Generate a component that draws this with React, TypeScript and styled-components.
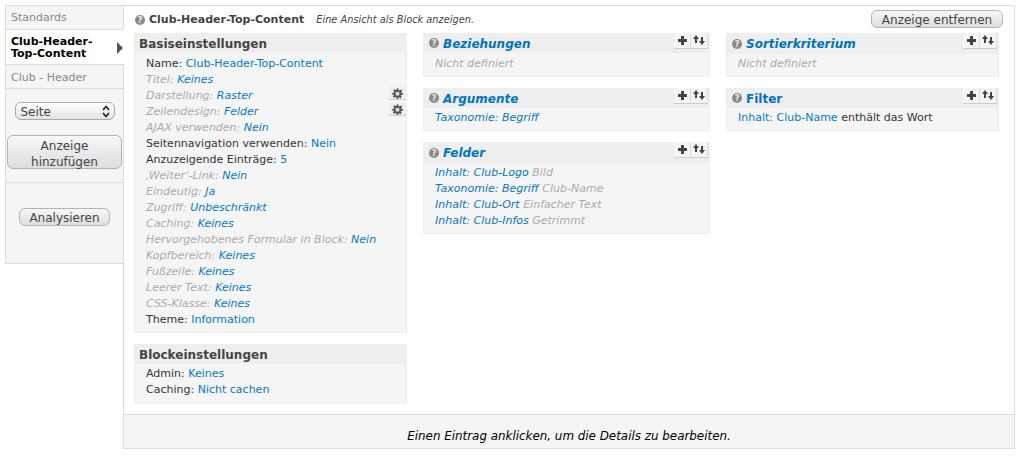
import React from 'react';
import styled, { createGlobalStyle } from 'styled-components';

const GlobalStyle = createGlobalStyle`
  html, body {
    margin: 0;
    padding: 0;
    background: #fff;
    font-family: "DejaVu Sans", sans-serif;
    font-size: 11px;
    color: #333;
  }
  * { box-sizing: border-box; }
`;

const Help = () => (
  <HelpIcon viewBox="0 0 10 10">
    <circle cx="5" cy="5" r="5" fill="#8a8a8a" />
    <text x="5" y="8" textAnchor="middle" fontSize="8" fontWeight="bold" fill="#eee" fontFamily="DejaVu Sans">?</text>
  </HelpIcon>
);

const Gear = () => (
  <svg width="11" height="11" viewBox="0 0 24 24">
    <path
      fill="#555"
      d="M10 1h4l.7 3.4 1.8.8 3-1.9 2.8 2.8-1.9 3 .8 1.8L24 11v3l-3.8.9-.8 1.8 1.9 3-2.8 2.8-3-1.9-1.8.8L13 24h-3l-.7-3.6-1.8-.8-3 1.9-2.8-2.8 1.9-3-.8-1.8L0 14v-3l3.8-.9.8-1.8-1.9-3 2.8-2.8 3 1.9 1.8-.8z"
    />
    <circle cx="12" cy="12.5" r="4.5" fill="#ddd" />
  </svg>
);

const Plus = () => (
  <svg width="11" height="11" viewBox="0 0 11 11">
    <path d="M4 1h3v3h3v3H7v3H4V7H1V4h3z" fill="#444" />
  </svg>
);

const Sort = () => (
  <svg width="12" height="11" viewBox="0 0 12 11">
    <path d="M3 0l3 4H4v4H2V4H0z" fill="#444" />
    <path d="M8 2h2v4h2l-3 4-3-4h2z" fill="#444" />
  </svg>
);

const Actions = () => (
  <ActionGroup>
    <ActionButton><Plus /></ActionButton>
    <ActionButton><Sort /></ActionButton>
  </ActionGroup>
);

const settings = [
  { label: 'Titel:', value: 'Keines', muted: true },
  { label: 'Darstellung:', value: 'Raster', muted: true, gear: true },
  { label: 'Zeilendesign:', value: 'Felder', muted: true, gear: true },
  { label: 'AJAX verwenden:', value: 'Nein', muted: true },
  { label: 'Seitennavigation verwenden:', value: 'Nein' },
  { label: 'Anzuzeigende Einträge:', value: '5' },
  { label: '‚Weiter‘-Link:', value: 'Nein', muted: true },
  { label: 'Eindeutig:', value: 'Ja', muted: true },
  { label: 'Zugriff:', value: 'Unbeschränkt', muted: true },
  { label: 'Caching:', value: 'Keines', muted: true },
  { label: 'Hervorgehobenes Formular in Block:', value: 'Nein', muted: true },
  { label: 'Kopfbereich:', value: 'Keines', muted: true },
  { label: 'Fußzeile:', value: 'Keines', muted: true },
  { label: 'Leerer Text:', value: 'Keines', muted: true },
  { label: 'CSS-Klasse:', value: 'Keines', muted: true },
  { label: 'Theme:', value: 'Information' },
];

const fields = [
  { link: 'Inhalt: Club-Logo', note: 'Bild' },
  { link: 'Taxonomie: Begriff', note: 'Club-Name' },
  { link: 'Inhalt: Club-Ort', note: 'Einfacher Text' },
  { link: 'Inhalt: Club-Infos', note: 'Getrimmt' },
];

const App = () => {
  return (
    <>
      <GlobalStyle />
      <Page>
        <Sidebar>
          <Tab>Standards</Tab>
          <Tab $active>
            Club-Header-
            <br />
            Top-Content
            <Arrow />
          </Tab>
          <Tab $low>Club - Header</Tab>
          <SelectWrap>
            <FakeSelect>
              <SelectLabel>Seite</SelectLabel>
              <svg width="8" height="13" viewBox="0 0 8 13">
                <path d="M1 5l3-3.5L7 5M1 8l3 3.5L7 8" fill="none" stroke="#222" strokeWidth="1.6" />
              </svg>
            </FakeSelect>
          </SelectWrap>
          <AddWrap>
            <AddButton>Anzeige hinzufügen</AddButton>
          </AddWrap>
          <AnalyzeWrap>
            <AnalyzeButton>Analysieren</AnalyzeButton>
          </AnalyzeWrap>
        </Sidebar>
        <Main>
          <Top>
            <Help />
            <TopTitle>Club-Header-Top-Content</TopTitle>
            <TopNote>Eine Ansicht als Block anzeigen.</TopNote>
            <RemoveButton>Anzeige entfernen</RemoveButton>
          </Top>
          <Columns>
            <Column>
              <Section>
                <SectionHead><SectionTitle>Basiseinstellungen</SectionTitle></SectionHead>
                <SettingsBody>
                  <Row>Name: <A>Club-Header-Top-Content</A></Row>
                  {settings.map(s => (
                    <Row key={s.label} $muted={s.muted}>
                      {s.label} <A>{s.value}</A>
                      {s.gear && <GearButton><Gear /></GearButton>}
                    </Row>
                  ))}
                </SettingsBody>
              </Section>
              <Section>
                <SectionHead><SectionTitle>Blockeinstellungen</SectionTitle></SectionHead>
                <BlockBody>
                  <Row>Admin: <A>Keines</A></Row>
                  <Row>Caching: <A>Nicht cachen</A></Row>
                </BlockBody>
              </Section>
            </Column>
            <Column>
              <Section>
                <SectionHead>
                  <Help />
                  <LinkTitle $italic>Beziehungen</LinkTitle>
                  <Actions />
                </SectionHead>
                <ListBody $loose>
                  <Row $muted>Nicht definiert</Row>
                </ListBody>
              </Section>
              <Section>
                <SectionHead>
                  <Help />
                  <LinkTitle $italic>Argumente</LinkTitle>
                  <Actions />
                </SectionHead>
                <ListBody>
                  <Row $muted><A>Taxonomie: Begriff</A></Row>
                </ListBody>
              </Section>
              <Section>
                <SectionHead $tall>
                  <Help />
                  <LinkTitle $italic>Felder</LinkTitle>
                  <Actions />
                </SectionHead>
                <ListBody>
                  {fields.map(f => (
                    <Row key={f.link} $muted>
                      <A>{f.link}</A> {f.note}
                    </Row>
                  ))}
                </ListBody>
              </Section>
            </Column>
            <Column>
              <Section>
                <SectionHead $tall>
                  <Help />
                  <LinkTitle $italic>Sortierkriterium</LinkTitle>
                  <Actions />
                </SectionHead>
                <ListBody>
                  <Row $muted>Nicht definiert</Row>
                </ListBody>
              </Section>
              <Section>
                <SectionHead>
                  <Help />
                  <LinkTitle>Filter</LinkTitle>
                  <Actions />
                </SectionHead>
                <ListBody>
                  <Row><A>Inhalt: Club-Name</A> enthält das Wort</Row>
                </ListBody>
              </Section>
            </Column>
          </Columns>
          <Footer>Einen Eintrag anklicken, um die Details zu bearbeiten.</Footer>
        </Main>
      </Page>
    </>
  );
};

const Page = styled.div`
  display: flex;
  align-items: flex-start;
  width: 1010px;
  margin: 5px 0 0 5px;
`;

const Sidebar = styled.div`
  width: 118px;
  height: 259px;
  flex: none;
  background: #f5f5f5;
  border: 1px solid #ddd;
  border-right: none;
`;

const Tab = styled.div<{ $active?: boolean; $low?: boolean }>`
  position: relative;
  padding: ${p => (p.$low ? '7px 5px 3px' : '6px 5px 4px')};
  min-height: 24px;
  line-height: 12px;
  font-weight: ${p => (p.$active ? 'bold' : 'normal')};
  color: ${p => (p.$active ? '#000' : '#888')};
  background: ${p => (p.$active ? '#fff' : '#f5f5f5')};
  border-bottom: 1px solid #ddd;
  margin-right: ${p => (p.$active ? '-1px' : '0')};
`;

const Arrow = styled.span`
  position: absolute;
  right: 1px;
  top: 12px;
  border-left: 6px solid #555;
  border-top: 6px solid transparent;
  border-bottom: 6px solid transparent;
`;

const SelectWrap = styled.div`
  display: flex;
  justify-content: center;
  padding: 13px 0 15px;
`;

const FakeSelect = styled.div`
  width: 100px;
  height: 18px;
  display: flex;
  align-items: center;
  justify-content: space-between;
  padding: 0 4px 0 5px;
  font-size: 12px;
  color: #444;
  border: 1px solid #aaa;
  border-radius: 6px;
  background: linear-gradient(#fff, #e4e4e4);
`;

const SelectLabel = styled.span`
  padding-top: 2px;
`;

const Button = styled.div`
  display: inline-block;
  padding: 0 10px;
  height: 18px;
  line-height: 18px;
  font-size: 12px;
  color: #444;
  text-align: center;
  border: 1px solid #b4b4b4;
  border-radius: 6px;
  background: linear-gradient(#f7f7f7, #dedede);
`;

const AddWrap = styled.div`
  padding: 0 1px 13px;
  border-bottom: 1px solid #ddd;
`;

const AddButton = styled(Button)`
  display: block;
  width: 115px;
  height: 34px;
  line-height: 16px;
  padding-top: 2px;
`;

const AnalyzeWrap = styled.div`
  display: flex;
  justify-content: center;
  padding-top: 25px;
`;

const AnalyzeButton = styled(Button)`
  width: 91px;
  padding: 0;
`;

const Main = styled.div`
  width: 892px;
  height: 444px;
  flex: none;
  display: flex;
  flex-direction: column;
  background: #fff;
  border: 1px solid #ddd;
`;

const Top = styled.div`
  display: flex;
  align-items: center;
  height: 27px;
  padding: 0 11px 0 10px;
`;

const HelpIcon = styled.svg`
  width: 10px;
  height: 10px;
  flex: none;
  margin: 0 4px 0 1px;
`;

const TopTitle = styled.span`
  font-weight: bold;
  color: #444;
`;

const TopNote = styled.span`
  margin-left: 12px;
  font-size: 9.8px;
  font-style: italic;
  color: #444;
`;

const RemoveButton = styled(Button)`
  margin-left: auto;
  margin-top: 4px;
  align-self: flex-start;
  width: 132px;
  padding: 0;
`;

const Columns = styled.div`
  flex: 1;
  display: grid;
  grid-template-columns: 273px 287px 273px;
  column-gap: 16px;
  padding: 0 0 0 10px;
`;

const Column = styled.div`
  display: flex;
  flex-direction: column;
  gap: 11px;
`;

const Section = styled.div`
  background: #f5f5f5;
  border: 1px solid #eee;
  border-top: none;
`;

const SectionHead = styled.div<{ $tall?: boolean }>`
  display: flex;
  align-items: center;
  height: ${p => (p.$tall ? '21px' : '20px')};
  padding: 0 2px 0 5px;
  background: #eee;
  margin: 0 -1px;

  span {
    margin-top: ${p => (p.$tall ? '0' : '2px')};
  }
`;

const SectionTitle = styled.span`
  font-size: 12px;
  font-weight: bold;
  color: #444;
`;

const LinkTitle = styled.span<{ $italic?: boolean }>`
  font-size: 12px;
  font-weight: bold;
  font-style: ${p => (p.$italic ? 'italic' : 'normal')};
  color: #0074bd;
`;

const ActionGroup = styled.div`
  display: flex;
  margin-left: auto;
  align-self: flex-start;
`;

const ActionButton = styled.div`
  width: 17px;
  height: 16px;
  display: flex;
  align-items: center;
  justify-content: center;
  background: #f4f4f4;
  border-bottom: 1px solid #ccc;
  border-right: 1px solid #ddd;
`;

const SettingsBody = styled.div`
  padding: 2px 0 5px 11px;
`;

const BlockBody = styled.div`
  padding: 1px 0 6px 11px;
`;

const ListBody = styled.div<{ $loose?: boolean }>`
  padding: ${p => (p.$loose ? '2px' : '1px')} 0 5px 11px;
`;

const Row = styled.div<{ $muted?: boolean }>`
  display: flex;
  align-items: center;
  gap: 0.32em;
  height: 16px;
  color: ${p => (p.$muted ? '#aaa' : '#333')};
  font-style: ${p => (p.$muted ? 'italic' : 'normal')};
`;

const A = styled.a`
  color: #0678c6;
`;

const GearButton = styled.div`
  margin-left: auto;
  align-self: flex-start;
  width: 17px;
  height: 13px;
  display: flex;
  align-items: center;
  justify-content: center;
  background: #eee;
  border-bottom: 1px solid #ccc;
`;

const Footer = styled.div`
  height: 34px;
  padding-top: 14px;
  line-height: 15px;
  font-size: 11.9px;
  text-align: center;
  font-style: italic;
  color: #000;
  background: #f5f5f5;
  border-top: 1px solid #ddd;
`;

export default App;
